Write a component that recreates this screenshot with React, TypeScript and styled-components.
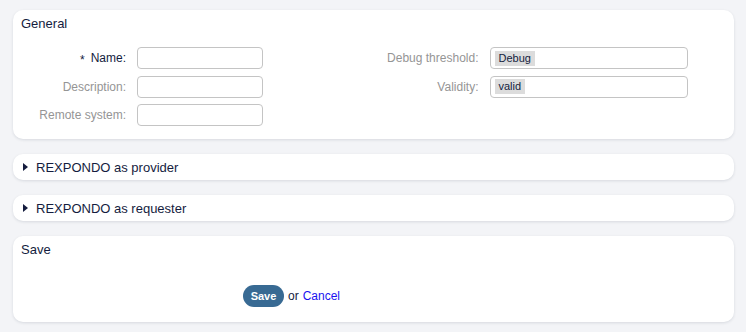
import React from "react";
import styled, { createGlobalStyle } from "styled-components";

const Global = createGlobalStyle`
  html, body { margin: 0; padding: 0; background: #f3f4f7; }
  body { font-family: "Liberation Sans", Arial, sans-serif; color: #141c3e; }
`;

const Page = styled.div`
  display: flex;
  flex-direction: column;
  gap: 15px;
  padding: 10px 12px 10px 13px;
`;

const Card = styled.section`
  background: #fff;
  border-radius: 10px;
  box-shadow: 0 1px 3px rgba(20, 30, 60, 0.12);
  padding: 6px 8px 13px 8px;
`;

const Heading = styled.div`
  font-size: 13px;
  line-height: 16px;
  color: #141c3e;
`;

const Form = styled.div`
  display: grid;
  grid-template-columns: 1fr 1fr;
  margin-top: 15px;
`;

const Column = styled.div<{ $inputWidth: number }>`
  display: grid;
  grid-template-columns: 105px ${(p) => p.$inputWidth}px;
  column-gap: 11px;
  row-gap: 6.5px;
  align-items: center;
  align-content: start;
`;

const Label = styled.label<{ $strong?: boolean }>`
  font-size: 12px;
  text-align: right;
  color: ${(p) => (p.$strong ? "#141c3e" : "#959595")};
  white-space: nowrap;
`;

const Star = styled.span`
  font-size: 12px;
  margin-right: 6px;
  position: relative;
  top: 2px;
`;

const Input = styled.div`
  box-sizing: border-box;
  height: 22px;
  border: 1px solid #c4c4c4;
  border-radius: 4px;
  background: #fff;
  display: flex;
  align-items: center;
  padding: 0 4px;
`;

const Chip = styled.span`
  background: #dcdcdc;
  font-size: 11px;
  line-height: 15px;
  padding: 0 4px 0 4px;
  color: #141c3e;
`;

const Toggle = styled.section`
  background: #fff;
  border-radius: 10px;
  box-shadow: 0 1px 3px rgba(20, 30, 60, 0.12);
  height: 26px;
  display: flex;
  align-items: center;
  padding-left: 10px;
  font-size: 13px;
  color: #141c3e;
`;

const Arrow = styled.span`
  width: 0;
  height: 0;
  border-top: 4px solid transparent;
  border-bottom: 4px solid transparent;
  border-left: 5px solid #141c3e;
  margin-right: 8px;
`;

const SaveCard = styled(Card)`
  padding-bottom: 15px;
`;

const Actions = styled.div`
  display: flex;
  align-items: center;
  gap: 4px;
  margin-top: 27px;
  padding-left: 222px;
  font-size: 12px;
`;

const Button = styled.button`
  background: #386a93;
  color: #fff;
  border: none;
  border-radius: 11px;
  height: 22px;
  width: 41px;
  font-family: "Liberation Sans", Arial, sans-serif;
  font-weight: bold;
  font-size: 11px;
  padding: 0;
`;

const Link = styled.a`
  color: #1a12f0;
  text-decoration: none;
`;

export default function App() {
  return (
    <>
      <Global />
      <Page>
        <Card>
          <Heading>General</Heading>
          <Form>
            <Column $inputWidth={126}>
              <Label $strong>
                <Star>*</Star>Name:
              </Label>
              <Input />
              <Label>Description:</Label>
              <Input />
              <Label>Remote system:</Label>
              <Input />
            </Column>
            <Column $inputWidth={198}>
              <Label>Debug threshold:</Label>
              <Input>
                <Chip>Debug</Chip>
              </Input>
              <Label>Validity:</Label>
              <Input>
                <Chip>valid</Chip>
              </Input>
            </Column>
          </Form>
        </Card>
        <Toggle>
          <Arrow />
          REXPONDO as provider
        </Toggle>
        <Toggle>
          <Arrow />
          REXPONDO as requester
        </Toggle>
        <SaveCard>
          <Heading>Save</Heading>
          <Actions>
            <Button>Save</Button>
            <span>or</span>
            <Link href="#">Cancel</Link>
          </Actions>
        </SaveCard>
      </Page>
    </>
  );
}
